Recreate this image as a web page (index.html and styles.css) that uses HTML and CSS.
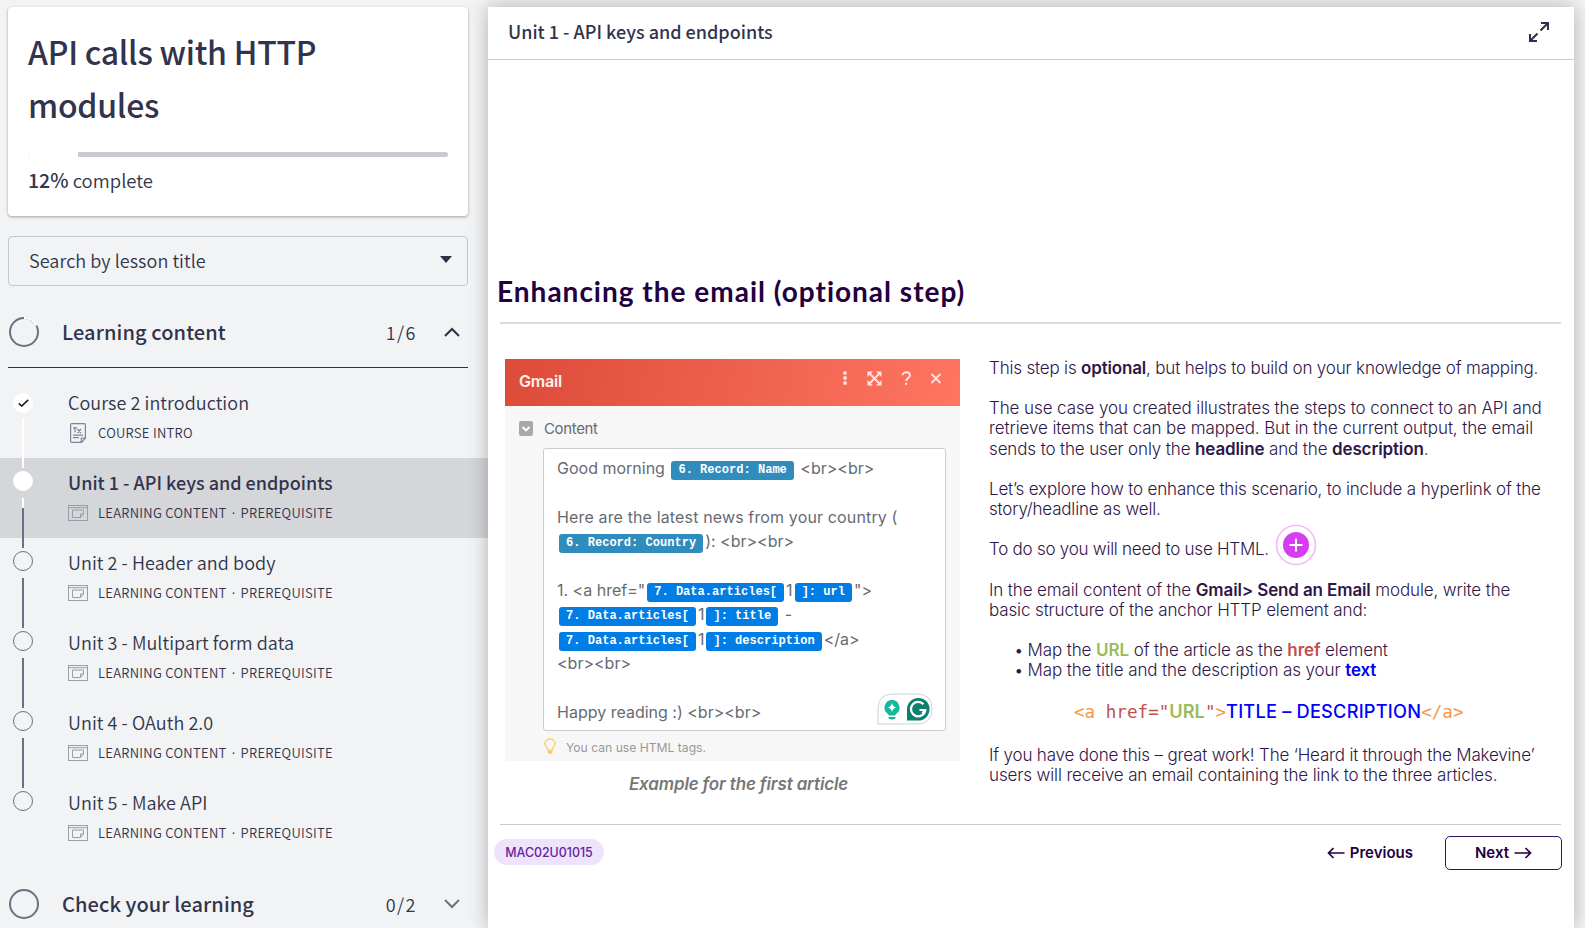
FILE: index.html
```html
<!DOCTYPE html>
<html lang="en">
<head>
<meta charset="utf-8">
<title>API calls with HTTP modules</title>
<link rel="stylesheet" href="styles.css">
</head>
<body>
<svg class="defs" width="0" height="0">
  <symbol id="lesson" viewBox="0 0 20 16"><g fill="none" stroke="#9a9caa" stroke-width="1"><rect x=".5" y=".5" width="19" height="15"/><path d="M.5 2.7H19.500M15.500 9V5H4.500v7.500h8l3-3.500h-3v3.500"/></g></symbol>
</svg>
<div class="app">
  <aside class="side">
    <section class="card">
      <h1 class="course">API calls with HTTP<br>modules</h1>
      <div class="bar"><div class="bar-done" style="width:12%"></div></div>
      <p class="done"><b>12%</b> complete</p>
    </section>
    <div class="search">Search by lesson title<i class="caret"></i></div>
    <div class="group group-open">
      <svg width="30" height="30" viewBox="0 0 30 30" fill="none"><circle cx="15" cy="15" r="14" stroke="#6c7083" stroke-width="2"/><path d="M15 1A14 14 0 0 1 27.500 8.500" stroke="#fff" stroke-width="2.200"/></svg>
      <span class="group-name">Learning content</span><span class="count">1/6</span>
      <svg width="16" height="10" viewBox="0 0 16 10" fill="none" stroke="#2d3048" stroke-width="2"><path d="M1 9l7-7 7 7"/></svg>
    </div>
    <ul class="lessons">
      <li class="lesson first">
        <div class="rail"><i class="dot full"><svg width="11" height="8" viewBox="0 0 11 8" fill="none" stroke="#1f2130" stroke-width="1.700"><path d="M.8 4.300L3.700 7 10.200.8"/></svg></i><i class="line white"></i></div>
        <div class="info"><div class="name">Course 2 introduction</div>
        <div class="meta"><svg width="20" height="20" viewBox="0 0 20 20" fill="none" stroke="#7d8496" stroke-width="1.200"><path d="M11 19.300H4q-1.400 0-1.400-1.400V2Q2.600.7 4 .7h12q1.400 0 1.400 1.400V15l-3.700 4.300H11M13.300 19v-4h4M5 4.800h4M7 4.800V9.500M9.500 6l3.500 4M13 6l-3.500 4M5 12.200h10M5 14.600h6"/></svg><span>COURSE INTRO</span></div></div>
      </li>
      <li class="lesson on">
        <div class="rail"><i class="dot full"></i><i class="line part"></i></div>
        <div class="info"><div class="name">Unit 1 - API keys and endpoints</div><div class="meta"><svg width="20" height="16"><use href="#lesson"/></svg><span>LEARNING CONTENT<i class="sep">·</i>PREREQUISITE</span></div></div>
      </li>
      <li class="lesson">
        <div class="rail"><i class="dot"></i><i class="line"></i></div>
        <div class="info"><div class="name">Unit 2 - Header and body</div><div class="meta"><svg width="20" height="16"><use href="#lesson"/></svg><span>LEARNING CONTENT<i class="sep">·</i>PREREQUISITE</span></div></div>
      </li>
      <li class="lesson">
        <div class="rail"><i class="dot"></i><i class="line"></i></div>
        <div class="info"><div class="name">Unit 3 - Multipart form data</div><div class="meta"><svg width="20" height="16"><use href="#lesson"/></svg><span>LEARNING CONTENT<i class="sep">·</i>PREREQUISITE</span></div></div>
      </li>
      <li class="lesson">
        <div class="rail"><i class="dot"></i><i class="line"></i></div>
        <div class="info"><div class="name">Unit 4 - OAuth 2.0</div><div class="meta"><svg width="20" height="16"><use href="#lesson"/></svg><span>LEARNING CONTENT<i class="sep">·</i>PREREQUISITE</span></div></div>
      </li>
      <li class="lesson">
        <div class="rail"><i class="dot"></i></div>
        <div class="info"><div class="name">Unit 5 - Make API</div><div class="meta"><svg width="20" height="16"><use href="#lesson"/></svg><span>LEARNING CONTENT<i class="sep">·</i>PREREQUISITE</span></div></div>
      </li>
    </ul>
    <div class="group group-closed">
      <svg width="30" height="30" viewBox="0 0 30 30" fill="none"><circle cx="15" cy="15" r="14" stroke="#6c7083" stroke-width="2"/></svg>
      <span class="group-name">Check your learning</span><span class="count">0/2</span>
      <svg width="16" height="10" viewBox="0 0 16 10" fill="none" stroke="#6c7083" stroke-width="2"><path d="M1 1l7 7 7-7"/></svg>
    </div>
  </aside>

  <main class="main">
    <header class="top"><span class="top-name">Unit 1 - API keys and endpoints</span>
      <svg class="expand" width="20" height="20" viewBox="0 0 20 20" fill="none" stroke="#2d3048" stroke-width="2"><path d="M12 1h7v7M19 1l-7.500 7.500M8 19H1v-7M1 19l7.500-7.500"/></svg>
    </header>
    <article class="slide">
      <h2 class="heading">Enhancing the email (optional step)</h2>
      <div class="rule"></div>
      <div class="cols">
        <figure class="shot">
          <div class="gmail">
            <div class="gm-top"><b>Gmail</b>
              <svg width="98" height="16" viewBox="0 0 98 16" fill="none" stroke="#ffe3de" stroke-width="1.900">
                <g fill="#ffe3de" stroke="none"><circle cx="2" cy="3" r="1.900"/><circle cx="2" cy="8" r="1.900"/><circle cx="2" cy="13" r="1.900"/><path d="M24.500 1.500h5.500l-5.500 5.500zM38.500 1.500v5.500l-5.500-5.500zM24.500 15.500v-5.500l5.500 5.500zM38.500 15.500h-5.500l5.500-5.500z"/></g>
                <path d="M26.500 3.500l10 10M36.500 3.500l-10 10M59.500 5.200C59.500 1.200 67 1.200 67 5.300 67 8 63.200 8 63.200 11M63.200 12.800v2.200M88.500 4l9 9M97.500 4l-9 9"/>
              </svg>
            </div>
            <div class="gm-body">
              <div class="gm-label"><svg width="14" height="15" viewBox="0 0 14 15"><rect width="14" height="15" rx="2" fill="#a9a9a9"/><path d="M3.500 6l3.500 3.300L10.500 6" fill="none" stroke="#fff" stroke-width="2"/></svg><span>Content</span></div>
              <div class="box">
                <p>Good morning <i class="tag rec">6. Record: Name</i> &lt;br&gt;&lt;br&gt;</p>
                <p>&nbsp;</p>
                <p class="wide">Here are the latest news from your country (</p>
                <p><i class="tag rec">6. Record: Country</i>): &lt;br&gt;&lt;br&gt;</p>
                <p>&nbsp;</p>
                <p>1. &lt;a href="<i class="tag">7. Data.articles[</i>1<i class="tag">]: url</i>"&gt;</p>
                <p><i class="tag">7. Data.articles[</i>1<i class="tag">]: title</i> -</p>
                <p><i class="tag">7. Data.articles[</i>1<i class="tag">]: description</i>&lt;/a&gt;</p>
                <p>&lt;br&gt;&lt;br&gt;</p>
                <p>&nbsp;</p>
                <p>Happy reading :) &lt;br&gt;&lt;br&gt;</p>
                <svg class="gram" width="56" height="32" viewBox="0 0 56 32"><path d="M1 31V16Q1 1 16 1H40Q55 1 55 16 55 31 40 31Z" fill="#fff" stroke="#cfd1de"/><path d="M15 7a7.500 7.500 0 0 0-4.500 13.500l1.500 2h6l1.500-2A7.500 7.500 0 0 0 15 7zM11.500 24h7v1.500q-3.500 2-7 0z" fill="#15b79e"/><path d="M15 10q.8 3.700 4.500 4.500-3.700.8-4.500 4.500-.8-3.700-4.500-4.500Q14.200 13.700 15 10z" fill="#fff"/><path d="M30 27V16.500A11.300 11.300 0 1 1 41.300 27.500H30z" fill="#0b806f"/><path d="M46.500 11.300A7.200 7.200 0 1 0 48.300 17H42.500M48 16.500l-2.500 4" fill="none" stroke="#fff" stroke-width="2.200"/></svg>
              </div>
              <div class="hint"><svg width="12" height="17" viewBox="0 0 12 17" fill="none" stroke="#ffd27a" stroke-width="1.600"><path d="M3.700 12C3.700 9.500 1 8.800 1 5.700A5 4.800 0 0 1 11 5.700C11 8.800 8.300 9.500 8.300 12z"/><path d="M3.500 13h5v1.500L6 16.200 3.500 14.500z" fill="#ffc75a" stroke="none"/></svg><span>You can use HTML tags.</span></div>
            </div>
          </div>
          <figcaption>Example for the first article</figcaption>
        </figure>
        <div class="text">
          <p class="t2">This step is <b>optional</b>, but helps to build on your knowledge of mapping.</p>
          <p>The use case you created illustrates the steps to connect to an API and<br>retrieve items that can be mapped. But in the current output, the email<br><span class="t1">sends to the user only the <b>headline</b> and the <b>description</b>.</span></p>
          <p class="t2">Let’s explore how to enhance this scenario, to include a hyperlink of the<br>story/headline as well.</p>
          <p class="t3 has-plus">To do so you will need to use HTML.<svg class="plus" width="42" height="42" viewBox="0 0 42 42"><circle cx="21" cy="21" r="19.500" fill="#fff" stroke="#f3b9fb" stroke-width="1.600"/><circle cx="21" cy="21" r="13" fill="#d63df0"/><path d="M14.500 21h13M21 14.500v13" stroke="#fff" stroke-width="2"/></svg></p>
          <p><span class="t1">In the email content of the <b>Gmail&gt; Send an Email</b> module, write the</span><br><span class="t1">basic structure of the anchor HTTP element and:</span></p>
          <ul class="maps"><li>Map the <b class="green">URL</b> of the article as the <b class="red">href</b> element</li><li>Map the title and the description as your <b class="blue">text</b></li></ul>
          <p class="code"><code class="orange">&lt;a </code><code class="red">href="</code><b class="green">URL</b><code class="red">"</code><code class="orange">&gt;</code><b class="blue">TITLE – DESCRIPTION</b><code class="orange">&lt;/a&gt;</code></p>
          <p class="t2">If you have done this – great work! The ‘Heard it through the Makevine’<br><span class="t1">users will receive an email containing the link to the three articles.</span></p>
        </div>
      </div>
      <div class="rule thin"></div>
      <footer class="foot">
        <span class="badge">MAC02U01015</span>
        <div class="nav">
          <a class="prev"><svg width="18" height="12" viewBox="0 0 18 12" fill="none" stroke="#23003f" stroke-width="1.700"><path d="M17.500 6H1.500M6.500 1l-5 5 5 5"/></svg>Previous</a>
          <a class="next">Next<svg width="18" height="12" viewBox="0 0 18 12" fill="none" stroke="#23003f" stroke-width="1.700"><path d="M.5 6h16M11.500 1l5 5-5 5"/></svg></a>
        </div>
      </footer>
    </article>
  </main>
</div>
</body>
</html>
```

FILE: styles.css
```css
* { box-sizing: border-box; }
body { margin: 0; background: #f1f3f5; color: #31344c; font-family: "Noto Sans CJK SC", "Noto Sans", sans-serif; overflow: hidden; }
p, h1, h2, ul, figure { margin: 0; padding: 0; }
ul { list-style: none; }
svg { display: block; flex: none; }
.defs { position: absolute; }
.app { display: flex; height: 928px; padding-top: 7px; overflow: hidden; }

/* Sidebar */
.side { width: 488px; flex: none; font-weight: 350; }
.card { width: 460px; height: 209px; margin-left: 8px; padding: 18px 20px 0; background: #fff; border-radius: 4px; box-shadow: 0 1px 3px rgba(0,0,0,.35); }
.course { font-size: 32px; line-height: 53px; font-weight: 500; letter-spacing: -.25px; }
.bar { height: 5px; margin-top: 21px; background: #c8cad6; border-radius: 3px; overflow: hidden; }
.bar-done { height: 5px; background: #fff; }
.done { margin-top: 9px; font-size: 18.500px; line-height: 28px; letter-spacing: 0; }
.done b { font-weight: 500; font-size: 19.500px; }
.search { display: flex; align-items: center; justify-content: space-between; width: 460px; height: 50px; margin: 20px 0 0 8px; padding: 0 15px 3px 20px; border: 1px solid #c4c6d4; border-radius: 4px; font-size: 18px; line-height: 28px; letter-spacing: .06px; }
.caret { border: 6px solid transparent; border-top: 7px solid #2d3048; border-bottom: 0; }
.group { display: flex; align-items: center; width: 460px; height: 82px; margin-left: 8px; padding: 0 8px 0 1px; }
.group-open { padding-top: 10px; border-bottom: 1px solid #2d3048; }
.group-closed { padding-top: 9px; }
.group-name { flex: 1; margin-left: 23px; font-size: 20px; font-weight: 500; line-height: 30px; letter-spacing: .1px; }
.count { margin-right: 27px; font-size: 18px; letter-spacing: 1.500px; line-height: 30px; }
.lessons { padding-top: 10px; }
.lesson { display: flex; height: 80px; }
.on { background: #d5d6da; }
.on .name { font-weight: 500; letter-spacing: 0; }
.rail { position: relative; z-index: 1; width: 68px; padding: 13px 0 0 13px; }
.first .rail { padding-top: 15px; }
.dot { display: flex; align-items: center; justify-content: center; width: 20px; height: 20px; border: 1px solid #6c7083; border-radius: 50%; }
.full { background: #fff; border-color: #fff; }
.line { display: block; width: 2px; height: 50px; margin: 7px 0 0 9px; background: #6c7083; }
.white { background: #fff; margin-top: 5px; }
.part { background: linear-gradient(#fff 10px, #6c7083 10px); }
.info { padding-top: 11px; }
.name { font-size: 18px; line-height: 26px; letter-spacing: .06px; }
.meta { display: flex; align-items: center; gap: 10px; height: 20px; margin-top: 8px; font-size: 13px; line-height: 20px; letter-spacing: .29px; }
.sep { display: inline-block; width: 14px; text-align: center; font-family: "Open Sans", sans-serif; font-style: normal; font-weight: 400; }

/* Lesson viewer */
.main { width: 1086px; flex: none; background: #fff; box-shadow: 0 0 18px rgba(0,0,0,.28); }
.top { display: flex; align-items: center; justify-content: space-between; height: 53px; padding: 0 25px 0 20px; border-bottom: 1px solid #c8cad6; font-size: 18px; font-weight: 500; }
.top-name { padding-bottom: 4px; }
.expand { margin-bottom: 2px; }
.slide { padding: 210px 13px 0 12px; font-family: Inter, sans-serif; color: #2f1649; }
.heading { height: 52px; margin-left: -3px; font: 700 28px/42px Lato, sans-serif; letter-spacing: 1px; font-variant-ligatures: none; color: #23003f; white-space: nowrap; }
.rule { height: 2px; background: #dcdadd; }
.thin { height: 1px; background: #cdcacf; }
.cols { display: flex; height: 500px; }
.shot { width: 455px; margin: 35px 0 0 5px; }
.gmail { height: 402px; background: #f7f7f7; }
.gm-top { display: flex; justify-content: space-between; height: 47px; padding: 11px 19px 0 14px; background: linear-gradient(100deg, #dd4b39, #ff7562); color: #fff0ee; font-size: 16px; line-height: 22px; }
.gm-top b { font-weight: 600; letter-spacing: -.2px; }
.gm-body { padding: 11px 14px 0; color: #666b73; }
.gm-label { display: flex; align-items: center; gap: 11px; height: 22px; font-size: 15px; letter-spacing: -.35px; }
.box { position: relative; height: 283px; margin: 9px 0 0 24px; padding: 6.500px 12px 0 13px; background: #fff; border: 1px solid #ccc; border-radius: 3px; font-size: 16px; line-height: 24.450px; white-space: nowrap; }
.box p { height: 24.450px; }
.box .wide { letter-spacing: .14px; padding-top: .6px; }
.tag { display: inline-block; height: 19px; margin: 0 2px; padding: 0 7px; background: #007ee5; border-radius: 3px; color: #fff; font: 700 12.050px/18px "Liberation Mono", monospace; vertical-align: 1px; }
.rec { background: #2f8cbc; }
.gram { position: absolute; right: 12px; bottom: 5px; }
.hint { display: flex; align-items: center; gap: 10px; height: 24px; margin: 3px 0 0 25px; color: #999; font-size: 12.150px; }
.hint span { padding-top: 3px; }
figcaption { margin: 12px 0 0 12px; text-align: center; font-style: italic; font-weight: 600; font-size: 17px; line-height: 22px; letter-spacing: -.15px; color: #777; }
.text { margin: 33.900px 0 0 29px; font-size: 17px; line-height: 20.150px; font-weight: 300; letter-spacing: -.1px; white-space: nowrap; }
.text p { margin-bottom: 20.150px; }
.text b { font-weight: 600; }
.t1 { letter-spacing: -.13px; }
.t2 { letter-spacing: -.18px; }
.t3 { letter-spacing: -.25px; }
.plus { position: absolute; right: -48px; top: -15px; }
.text .has-plus { position: relative; width: 280px; }
.maps { margin: 0 0 20.150px 39px; }
.maps li::before { content: "•"; margin: 0 4px 0 -14px; }
.text .code { margin: 0 0 22.500px 85px; padding-top: 1px; letter-spacing: 0; font-size: 18px; }
.code b { font-size: 18.200px; }
.text .code .blue { font-weight: 500; letter-spacing: .22px; }
.code code { font: 400 17.600px/20px "DejaVu Sans Mono", monospace; }
.green { color: #9bbb59; }
.red { color: #c0504d; }
.blue { color: #00f; }
.orange { color: #f79646; }
.foot { display: flex; justify-content: space-between; margin: 11px -1px 0 -6px; }
.badge { width: 110px; height: 26px; margin-top: 3px; text-align: center; border-radius: 13px; background: #efe3fb; color: #5f259f; font-size: 12.400px; font-weight: 500; line-height: 27px; }
.nav { display: flex; gap: 32px; color: #23003f; font-size: 15px; font-weight: 600; line-height: 34px; }
.prev, .next { display: flex; align-items: center; gap: 5px; }
.next { justify-content: center; width: 117px; height: 34px; border: 1px solid #35105a; border-radius: 5px; }
```
